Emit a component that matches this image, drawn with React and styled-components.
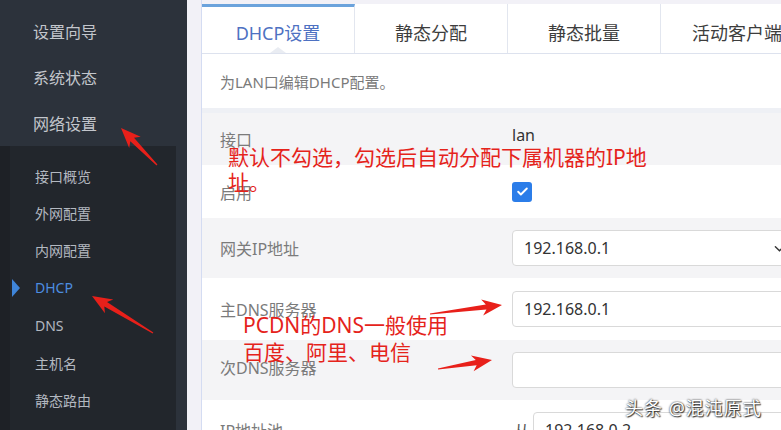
import styled, { createGlobalStyle, css } from 'styled-components'

const GlobalStyle = createGlobalStyle`
  html, body {
    margin: 0;
    padding: 0;
  }
  body {
    width: 781px;
    height: 430px;
    overflow: hidden;
    background: #f2f1f7;
    font-family: 'Noto Sans', 'Noto Sans CJK SC', sans-serif;
  }
`

const Page = styled.div`
  position: relative;
  display: flex;
  width: 781px;
  height: 430px;
  overflow: hidden;
`

const Sidebar = styled.aside`
  flex: none;
  width: 187px;
  display: flex;
  flex-direction: column;
  padding-top: 8px;
  box-sizing: border-box;
  background: #2c323b;
`

const TopItem = styled.div`
  height: 46px;
  display: flex;
  align-items: center;
  padding-left: 33px;
  font-size: 16px;
  color: #c3c6cc;
`

const SubMenu = styled.div`
  flex: 1;
  margin-right: 11px;
  padding-top: 11px;
  border-left: 10px solid #1e2126;
  background: #22262c;
`

const SubItem = styled.div`
  position: relative;
  height: 37.4px;
  display: flex;
  align-items: center;
  padding-left: 25px;
  font-size: 14px;
  color: #b3b8c0;

  ${(p) =>
    p.$active &&
    css`
      color: #4d8de0;
      &::before {
        content: '';
        position: absolute;
        left: 2px;
        top: 50%;
        margin-top: -9px;
        border-top: 9px solid transparent;
        border-bottom: 9px solid transparent;
        border-left: 8px solid #3f85da;
      }
    `}
`

const Main = styled.main`
  flex: 1;
  min-width: 0;
  margin-left: 14px;
  display: flex;
  flex-direction: column;
  overflow: hidden;
  border-left: 1px solid #d4dcf2;
  background: #ffffff;
`

const Tabs = styled.nav`
  flex: none;
  display: flex;
  padding-top: 4px;
  background: #f2f1f7;
  border-bottom: 1px solid #dde2ee;
`

const Tab = styled.div`
  position: relative;
  flex: none;
  width: 153px;
  height: 49px;
  box-sizing: border-box;
  padding-top: 6px;
  display: flex;
  align-items: center;
  justify-content: center;
  background: #ffffff;
  border-right: 1px solid #e2e6ef;
  font-size: 18px;
  color: #3d3d3d;
  white-space: nowrap;

  ${(p) =>
    p.$active &&
    css`
      padding-top: 3px;
      border-top: 3px solid #6ba3dc;
      color: #4e71c2;
      &::after {
        content: '';
        position: absolute;
        left: 50%;
        bottom: 0;
        margin-left: -8px;
        border-left: 8px solid transparent;
        border-right: 8px solid transparent;
        border-bottom: 6px solid #e9ecf2;
      }
    `}
`

const Desc = styled.div`
  flex: none;
  height: 59px;
  box-sizing: border-box;
  display: flex;
  align-items: center;
  padding-left: 18px;
  font-size: 15px;
  color: #7a7a7a;
  border-bottom: 5px solid #eef0f5;
`

const Row = styled.div`
  flex: none;
  height: ${(p) => p.$h}px;
  display: grid;
  grid-template-columns: 292px 1fr;
  align-items: center;
  padding-left: 18px;
  background: ${(p) => (p.$shade ? '#f4f4f6' : '#ffffff')};
`

const Label = styled.span`
  font-size: 16px;
  color: #7b7b7b;
  margin-top: ${(p) => p.$lift || 0}px;
`

const Value = styled.span`
  font-size: 16px;
  color: #333333;
  margin-top: -8px;
`

const Field = styled.div`
  width: ${(p) => p.$w || 300}px;
  height: 36px;
  box-sizing: border-box;
  display: flex;
  align-items: center;
  justify-content: space-between;
  padding: 0 11px;
  border: 1px solid #d9d9d9;
  border-radius: 4px;
  background: #ffffff;
  font-size: 16px;
  color: #333333;
`

const Check = styled.span`
  width: 20px;
  height: 20px;
  display: flex;
  align-items: center;
  justify-content: center;
  border-radius: 3px;
  background: #2b7de9;
`

const Range = styled.div`
  display: flex;
  align-items: center;
  gap: 3px;
  font-size: 16px;
  color: #555555;
  margin-left: 2px;
`

const Note = styled.div`
  position: absolute;
  left: ${(p) => p.$x}px;
  top: ${(p) => p.$y}px;
  font-size: 21px;
  line-height: ${(p) => p.$lh}px;
  color: #e5231b;
  white-space: nowrap;
  pointer-events: none;
`

const Arrows = styled.svg`
  position: absolute;
  left: 0;
  top: 0;
  pointer-events: none;
`

const Watermark = styled.div`
  position: absolute;
  left: 625px;
  top: 394px;
  font-size: 18px;
  letter-spacing: 1px;
  color: #ffffff;
  text-shadow: 0 0 2px #000, 1px 1px 1px rgba(0, 0, 0, 0.7);
  white-space: nowrap;
`

function arrowPoints(tail, tip) {
  const dx = tip[0] - tail[0]
  const dy = tip[1] - tail[1]
  const len = Math.hypot(dx, dy)
  const ux = dx / len
  const uy = dy / len
  const nx = -uy
  const ny = ux
  const head = 20
  const bx = tip[0] - ux * head
  const by = tip[1] - uy * head
  const jx = bx + ux * 4
  const jy = by + uy * 4
  const pts = [
    [tail[0] + nx * 0.6, tail[1] + ny * 0.6],
    [jx + nx * 2.6, jy + ny * 2.6],
    [bx + nx * 8, by + ny * 8],
    tip,
    [bx - nx * 8, by - ny * 8],
    [jx - nx * 2.6, jy - ny * 2.6],
    [tail[0] - nx * 0.6, tail[1] - ny * 0.6],
  ]
  return pts.map((p) => p.join(',')).join(' ')
}

const arrows = [
  [[157, 165], [121, 128]],
  [[153, 333], [92, 296]],
  [[430, 314], [502, 305]],
  [[438, 369], [492, 360]],
]

const topItems = ['设置向导', '系统状态', '网络设置']
const subItems = ['接口概览', '外网配置', '内网配置', 'DHCP', 'DNS', '主机名', '静态路由']
const tabs = ['DHCP设置', '静态分配', '静态批量', '活动客户端']

export default function App() {
  return (
    <Page>
      <GlobalStyle />
      <Sidebar>
        {topItems.map((t) => (
          <TopItem key={t}>{t}</TopItem>
        ))}
        <SubMenu>
          {subItems.map((t) => (
            <SubItem key={t} $active={t === 'DHCP'}>
              {t}
            </SubItem>
          ))}
        </SubMenu>
      </Sidebar>

      <Main>
        <Tabs>
          {tabs.map((t, i) => (
            <Tab key={t} $active={i === 0}>
              {t}
            </Tab>
          ))}
        </Tabs>
        <Desc>为LAN口编辑DHCP配置。</Desc>

        <Row $h={52} $shade>
          <Label>接口</Label>
          <Value>lan</Value>
        </Row>
        <Row $h={53}>
          <Label>启用</Label>
          <Check>
            <svg width="13" height="13" viewBox="0 0 24 24" fill="none" stroke="#fff" strokeWidth="3.5" strokeLinecap="round" strokeLinejoin="round">
              <path d="M4 12.5l5 5L20 6.5" />
            </svg>
          </Check>
        </Row>
        <Row $h={60} $shade>
          <Label>网关IP地址</Label>
          <Field $w={285}>
            192.168.0.1
            <svg width="11" height="11" viewBox="0 0 24 24" fill="none" stroke="#333" strokeWidth="3" strokeLinecap="round">
              <path d="M3 8l9 9 9-9" />
            </svg>
          </Field>
        </Row>
        <Row $h={62}>
          <Label>主DNS服务器</Label>
          <Field>192.168.0.1</Field>
        </Row>
        <Row $h={60} $shade>
          <Label $lift={-6}>次DNS服务器</Label>
          <Field />
        </Row>
        <Row $h={60}>
          <Label>IP地址池</Label>
          <Range>
            从<Field $w={260}>192.168.0.2</Field>
          </Range>
        </Row>
      </Main>

      <Note $x={228} $y={145} $lh={25}>
        默认不勾选，勾选后自动分配下属机器的IP地
        <br />
        址。
      </Note>
      <Note $x={243} $y={312} $lh={27}>
        PCDN的DNS一般使用
        <br />
        百度、阿里、电信
      </Note>

      <Arrows width="781" height="430" viewBox="0 0 781 430">
        {arrows.map(([a, b], i) => (
          <polygon key={i} points={arrowPoints(a, b)} fill="#e8201a" />
        ))}
      </Arrows>

      <Watermark>头条 @混沌原式</Watermark>
    </Page>
  )
}
